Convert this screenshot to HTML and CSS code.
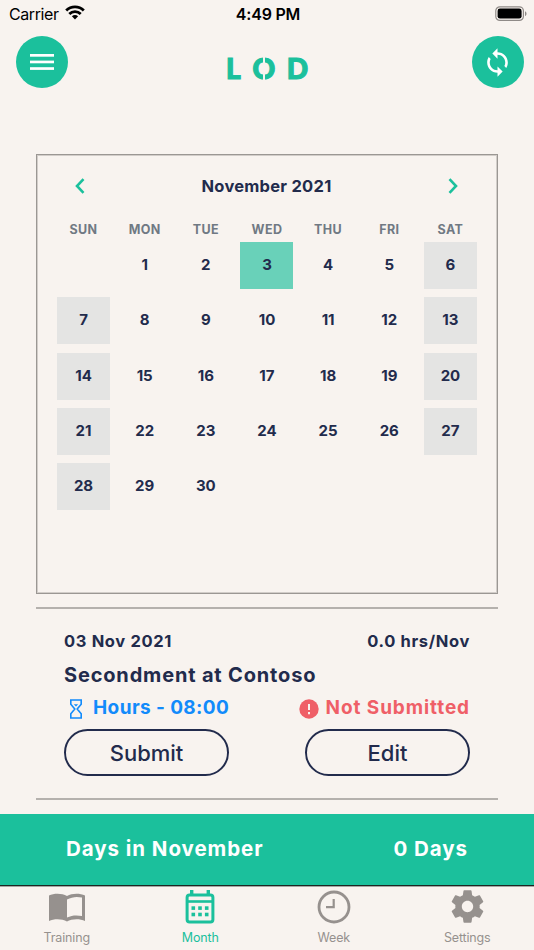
FILE: index.html
```html
<!DOCTYPE html>
<html lang="en">
<head>
    <meta charset="UTF-8">
    <meta name="viewport" content="width=device-width, initial-scale=1.0">
    <title>LOD - Month</title>
    <link rel="stylesheet" href="styles.css">
</head>
<body>
    <div class="status-bar">
        <div class="carrier">
            <span>Carrier</span>
            <svg width="20" height="15" viewBox="0 0 20 15">
                <g fill="none" stroke="#000" stroke-width="2.8">
                    <path d="M1.2 5.6a12.4 12.4 0 0 1 17.6 0"/>
                    <path d="M4.3 9a8.1 8.1 0 0 1 11.4 0"/>
                </g>
                <path d="M10 14.5l-3.1-3.2a4.4 4.4 0 0 1 6.2 0z"/>
            </svg>
        </div>
        <div class="time">4:49 PM</div>
        <div class="battery">
            <svg width="32" height="16" viewBox="0 0 32 16">
                <rect x=".8" y=".8" width="27.6" height="13.6" rx="4" fill="none" stroke="#8f8a87" stroke-width="1.2"/>
                <rect x="2.6" y="2.6" width="24" height="10" rx="2.4"/>
                <path d="M30 5.2c2 .8 2 4 0 4.8z" fill="#8f8a87"/>
            </svg>
        </div>
    </div>

    <header class="header">
        <button class="round-btn" aria-label="Menu">
            <svg width="24" height="16" viewBox="0 0 24 16" fill="#fff">
                <rect width="24" height="2.7"/>
                <rect y="6.6" width="24" height="2.7"/>
                <rect y="13.2" width="24" height="2.7"/>
            </svg>
        </button>
        <div class="logo">
            <span>L</span>
            <span class="logo-o">O</span>
            <span>D</span>
        </div>
        <button class="round-btn" aria-label="Sync">
            <svg width="31" height="31" viewBox="0 0 24 24" fill="#fff">
                <path d="M12 4V1L8 5l4 4V6c3.31 0 6 2.69 6 6 0 1.01-.25 1.97-.7 2.8l1.46 1.46C19.54 15.03 20 13.57 20 12c0-4.42-3.58-8-8-8zm0 14c-3.31 0-6-2.69-6-6 0-1.01.25-1.97.7-2.8L5.24 7.74C4.46 8.97 4 10.43 4 12c0 4.42 3.58 8 8 8v3l4-4-4-4v3z"/>
            </svg>
        </button>
    </header>

    <main class="content">
        <section class="calendar">
            <div class="calendar-header">
                <svg width="10" height="16" viewBox="0 0 10 16"><path d="M8.5 1.2L2 8l6.5 6.8"/></svg>
                <h1>November 2021</h1>
                <svg width="10" height="16" viewBox="0 0 10 16"><path d="M1.5 1.2L8 8l-6.5 6.8"/></svg>
            </div>
            <div class="weekdays">
                <span>SUN</span>
                <span>MON</span>
                <span>TUE</span>
                <span>WED</span>
                <span>THU</span>
                <span>FRI</span>
                <span>SAT</span>
            </div>
            <div class="days">
                <span></span>
                <span>1</span>
                <span>2</span>
                <span class="selected">3</span>
                <span>4</span>
                <span>5</span>
                <span class="weekend">6</span>
                <span class="weekend">7</span>
                <span>8</span>
                <span>9</span>
                <span>10</span>
                <span>11</span>
                <span>12</span>
                <span class="weekend">13</span>
                <span class="weekend">14</span>
                <span>15</span>
                <span>16</span>
                <span>17</span>
                <span>18</span>
                <span>19</span>
                <span class="weekend">20</span>
                <span class="weekend">21</span>
                <span>22</span>
                <span>23</span>
                <span>24</span>
                <span>25</span>
                <span>26</span>
                <span class="weekend">27</span>
                <span class="weekend">28</span>
                <span>29</span>
                <span>30</span>
            </div>
        </section>

        <section class="entry">
            <div class="row date-row">
                <span class="date">03 Nov 2021</span>
                <span class="total">0.0 hrs/Nov</span>
            </div>
            <h2>Secondment at Contoso</h2>
            <div class="row status-row">
                <div class="hours">
                    <svg width="14" height="20" viewBox="0 0 14 20" fill="none" stroke="currentColor" stroke-width="1.6">
                        <path d="M1.8 1h10.4v4.2L8.2 10l4 4.8V19H1.8v-4.2l4-4.8-4-4.8z"/>
                        <path d="M4.8 5.2h4.4L7 7.4z" fill="currentColor" stroke="none"/>
                    </svg>
                    <span>Hours - 08:00</span>
                </div>
                <div class="not-submitted">
                    <svg width="20" height="20" viewBox="0 0 20 20">
                        <circle cx="10" cy="10" r="9.7" fill="currentColor"/>
                        <path d="M10 5v6M10 13v2.2" stroke="#f8f3ef" stroke-width="2"/>
                    </svg>
                    <span>Not Submitted</span>
                </div>
            </div>
            <div class="row">
                <button class="btn">Submit</button>
                <button class="btn">Edit</button>
            </div>
        </section>
    </main>

    <div class="summary">
        <span class="summary-label">Days in November</span>
        <span class="summary-value">0 Days</span>
    </div>

    <nav class="tabs">
        <a class="tab">
            <svg width="36" height="34" viewBox="0 0 36 34">
                <path fill="currentColor" fill-rule="evenodd" d="M0 5.5C5 3 13 3 18 6c5-3 13-3 18-.5V31c-5-2.5-13-2.5-18 .5-5-3-13-3-18-.5zM18 9.5v18c5-2.3 10-2.5 15-1.4V7.6c-5-1.3-10-.8-15 1.9z"/>
            </svg>
            <span>Training</span>
        </a>
        <a class="tab active">
            <svg width="30" height="34" viewBox="0 0 30 34">
                <rect x="2.1" y="5" width="25.8" height="27" rx="2.5" fill="none" stroke="currentColor" stroke-width="3"/>
                <g fill="currentColor">
                    <rect x="5" y="0" width="3.4" height="5"/>
                    <rect x="21.6" y="0" width="3.4" height="5"/>
                    <rect x="2" y="10.2" width="26" height="2.6"/>
                    <rect x="6.5" y="16.3" width="3.6" height="3.6"/>
                    <rect x="13.2" y="16.3" width="3.6" height="3.6"/>
                    <rect x="19.9" y="16.3" width="3.6" height="3.6"/>
                    <rect x="6.5" y="22.7" width="3.6" height="3.6"/>
                    <rect x="13.2" y="22.7" width="3.6" height="3.6"/>
                    <rect x="19.9" y="22.7" width="3.6" height="3.6"/>
                </g>
            </svg>
            <span>Month</span>
        </a>
        <a class="tab">
            <svg width="34" height="34" viewBox="0 0 34 34" fill="none" stroke="currentColor">
                <circle cx="17" cy="17" r="15" stroke-width="2.8"/>
                <path d="M16.7 9v8.2H9" stroke-width="2.2"/>
            </svg>
            <span>Week</span>
        </a>
        <a class="tab">
            <svg width="39" height="39" viewBox="0 0 24 24" fill="currentColor">
                <path d="M19.43 12.98c.04-.32.07-.64.07-.98s-.03-.66-.07-.98l2.11-1.65c.19-.15.24-.42.12-.64l-2-3.46c-.12-.22-.39-.3-.61-.22l-2.49 1c-.52-.4-1.08-.73-1.69-.98l-.38-2.65C14.46 2.18 14.25 2 14 2h-4c-.25 0-.46.18-.49.42l-.38 2.65c-.61.25-1.17.59-1.69.98l-2.49-1c-.23-.09-.49 0-.61.22l-2 3.46c-.13.22-.07.49.12.64l2.11 1.65c-.04.32-.07.65-.07.98s.03.66.07.98l-2.11 1.65c-.19.15-.24.42-.12.64l2 3.46c.12.22.39.3.61.22l2.49-1c.52.4 1.08.73 1.69.98l.38 2.65c.03.24.24.42.49.42h4c.25 0 .46-.18.49-.42l.38-2.65c.61-.25 1.17-.59 1.69-.98l2.49 1c.23.09.49 0 .61-.22l2-3.46c.12-.22.07-.49-.12-.64l-2.11-1.65zM12 15.5c-1.93 0-3.5-1.57-3.5-3.5s1.57-3.5 3.5-3.5 3.5 1.57 3.5 3.5-1.57 3.5-3.5 3.5z"/>
            </svg>
            <span>Settings</span>
        </a>
    </nav>
</body>
</html>
```
FILE: styles.css
```css
* {
    margin: 0;
    padding: 0;
    box-sizing: border-box;
}

body {
    font-family: Inter, 'Liberation Sans', sans-serif;
    background: #f8f3ef;
    color: #222b4c;
    height: 950px;
    display: flex;
    flex-direction: column;
    overflow: hidden;
    white-space: nowrap;
}

button {
    font-family: inherit;
    color: inherit;
    border: none;
    background: none;
}

.status-bar {
    height: 28px;
    padding: 0 7px 0 9px;
    display: grid;
    grid-template-columns: 1fr auto 1fr;
    align-items: center;
    color: #000;
    font-size: 16px;
}

.carrier {
    display: flex;
    align-items: center;
    gap: 6px;
    letter-spacing: -0.4px;
}

.carrier svg {
    margin-top: -3px;
}

.time {
    font-weight: 600;
    letter-spacing: -0.2px;
}

.battery {
    display: flex;
    justify-content: flex-end;
}

.header {
    height: 68px;
    padding: 0 10.4px 0 15.6px;
    display: flex;
    align-items: center;
    justify-content: space-between;
}

.round-btn {
    width: 52px;
    height: 52px;
    border-radius: 50%;
    background: #1bc09c;
    display: flex;
    align-items: center;
    justify-content: center;
}

.logo {
    width: 82px;
    margin: 12px 5px 0 0;
    display: flex;
    justify-content: space-between;
    color: #1bc09c;
    font-family: Lato, sans-serif;
    font-size: 28px;
    font-weight: 900;
    line-height: 30px;
    -webkit-text-stroke: 1.2px #1bc09c;
}

.logo-o {
    position: relative;
}

/* slit through the O */
.logo-o::after {
    content: '';
    position: absolute;
    top: 0;
    left: 50%;
    width: 2px;
    height: 100%;
    margin-left: -1px;
    background: #f8f3ef;
}

.content {
    padding: 58px 36px 0;
    height: 718px;
}

.calendar {
    height: 440px;
    border: 1px solid #9b9793;
    box-shadow: inset 0 0 0 1px #d2cdc9;
    padding: 15px 20px 0;
}

.calendar-header {
    height: 32px;
    padding: 0 19px 0 18px;
    display: flex;
    align-items: center;
    justify-content: space-between;
}

.calendar-header svg {
    fill: none;
    stroke: #1bc09c;
    stroke-width: 2.6;
}

.calendar-header h1 {
    font-size: 16.5px;
    font-weight: 700;
    letter-spacing: 0.25px;
}

.weekdays,
.days {
    display: grid;
    grid-template-columns: repeat(7, 53px);
    justify-content: space-between;
    text-align: center;
}

.weekdays {
    margin-top: 17px;
    height: 23px;
    line-height: 21px;
    color: #707983;
    font-size: 12.5px;
    font-weight: 700;
    letter-spacing: 0.4px;
}

.days {
    grid-auto-rows: 47px;
    row-gap: 8.3px;
    line-height: 46px;
    font-size: 15px;
    font-weight: 700;
}

.days .weekend {
    background: #e4e4e3;
}

.days .selected {
    background: #69d1b9;
}

.entry {
    height: 193px;
    margin-top: 13px;
    padding: 19px 28px 0;
    border-top: 2px solid #b5b1ad;
    border-bottom: 2px solid #b5b1ad;
    font-weight: 700;
}

.row {
    display: flex;
    align-items: center;
    justify-content: space-between;
}

.date-row {
    height: 26px;
    font-size: 16.5px;
    letter-spacing: 0.65px;
}

.entry h2 {
    font-size: 20px;
    line-height: 42px;
    letter-spacing: 0.83px;
}

.status-row {
    height: 22px;
    margin-bottom: 11px;
    font-size: 19px;
}

.hours,
.not-submitted {
    display: flex;
    align-items: center;
}

.hours {
    color: #128bfb;
    padding-left: 5px;
    gap: 10px;
    letter-spacing: 0.4px;
}

.hours svg,
.not-submitted svg {
    margin-top: 3px;
}

.not-submitted {
    color: #ef5f67;
    gap: 7px;
    letter-spacing: 0.9px;
}

.btn {
    width: 165px;
    height: 47px;
    border: 2px solid #222b4c;
    border-radius: 24px;
    font-size: 22px;
    font-weight: 500;
}

.summary {
    height: 71px;
    padding: 0 66px 2px;
    display: flex;
    align-items: center;
    justify-content: space-between;
    background: #1bc09c;
    color: #fff;
    font-size: 20.5px;
    font-weight: 700;
    letter-spacing: 0.95px;
}

.tabs {
    height: 65px;
    border-top: 1px solid #1c2522;
    box-shadow: inset 0 1px 0 #a5a6a2;
    display: grid;
    grid-template-columns: repeat(4, 1fr);
}

.tab {
    display: flex;
    flex-direction: column;
    align-items: center;
    color: #96918e;
    font-size: 12.5px;
    letter-spacing: -0.15px;
}

.tab svg {
    height: 34px;
    margin: 4px 0 6px;
}

.tab:last-child svg {
    height: 39px;
    margin: 1px 0 4px;
}

.tab span {
    line-height: 15px;
}

.tab.active {
    color: #1bc09c;
}
```
